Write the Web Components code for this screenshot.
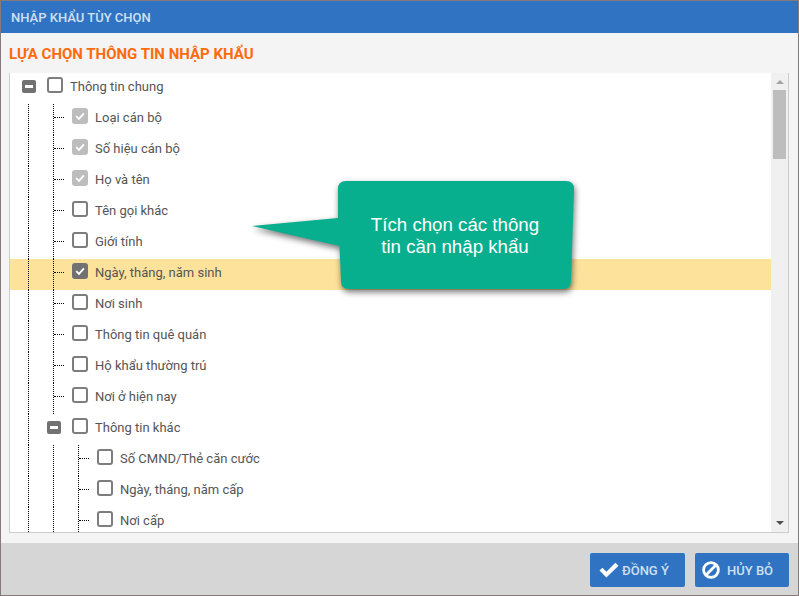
<!DOCTYPE html>
<html lang="vi">
<head>
<meta charset="utf-8">
<title>Nhập khẩu tùy chọn</title>
<style>
html, body { margin: 0; height: 100%; overflow: hidden; }
body { font-family: Roboto, "Liberation Sans", sans-serif; }
</style>
</head>
<body>
<import-dialog>
  <span slot="title">NHẬP KHẨU TÙY CHỌN</span>
  <span slot="heading">LỰA CHỌN THÔNG TIN NHẬP KHẨU</span>
  <option-tree slot="body"></option-tree>
  <dialog-button slot="actions" icon="check">ĐỒNG Ý</dialog-button>
  <dialog-button slot="actions" icon="ban">HỦY BỎ</dialog-button>
  <note-callout slot="overlay">Tích chọn các thông<br>tin cần nhập khẩu</note-callout>
</import-dialog>

<script>
class ImportDialog extends HTMLElement {
    connectedCallback() {
        this.attachShadow({ mode: 'open' });
        this.shadowRoot.innerHTML = `
            <style>
                :host {
                    display: flex;
                    flex-direction: column;
                    position: relative;
                    box-sizing: border-box;
                    width: 799px;
                    height: 596px;
                    border: 1px solid #86797a;
                    background: #f4f4f4;
                }
                header {
                    flex: none;
                    height: 32px;
                    padding-left: 10px;
                    display: flex;
                    align-items: center;
                    background: #3073c2;
                    color: #cfe0f3;
                    font-size: 13px;
                    font-weight: 500;
                }
                .content {
                    flex: 1;
                    min-height: 0;
                    display: flex;
                    flex-direction: column;
                    padding: 0 9px 10px 8px;
                }
                h2 {
                    flex: none;
                    margin: 0;
                    height: 40px;
                    padding-top: 2px;
                    box-sizing: border-box;
                    display: flex;
                    align-items: center;
                    color: #ff6a0c;
                    font-size: 15px;
                    font-weight: 700;
                }
                footer {
                    flex: none;
                    height: 52px;
                    box-sizing: border-box;
                    padding: 10px 9px 0 0;
                    display: flex;
                    justify-content: flex-end;
                    gap: 10px;
                    background: #d6d6d6;
                }
            </style>
            <header><slot name="title"></slot></header>
            <div class="content">
                <h2><slot name="heading"></slot></h2>
                <slot name="body"></slot>
            </div>
            <footer><slot name="actions"></slot></footer>
            <slot name="overlay"></slot>
        `;
    }
}

const TREE_ROWS = [
    { label: 'Thông tin chung', level: 0, group: true },
    { label: 'Loại cán bộ', level: 1, state: 'locked' },
    { label: 'Số hiệu cán bộ', level: 1, state: 'locked' },
    { label: 'Họ và tên', level: 1, state: 'locked' },
    { label: 'Tên gọi khác', level: 1 },
    { label: 'Giới tính', level: 1 },
    { label: 'Ngày, tháng, năm sinh', level: 1, state: 'checked', active: true },
    { label: 'Nơi sinh', level: 1 },
    { label: 'Thông tin quê quán', level: 1 },
    { label: 'Hộ khẩu thường trú', level: 1 },
    { label: 'Nơi ở hiện nay', level: 1 },
    { label: 'Thông tin khác', level: 1, group: true },
    { label: 'Số CMND/Thẻ căn cước', level: 2 },
    { label: 'Ngày, tháng, năm cấp', level: 2 },
    { label: 'Nơi cấp', level: 2 }
];

class OptionTree extends HTMLElement {
    connectedCallback() {
        this.attachShadow({ mode: 'open' });
        this.shadowRoot.innerHTML = `
            <style>
                :host {
                    display: flex;
                    flex: 1;
                    min-height: 0;
                    box-sizing: border-box;
                    background: #fff;
                    border-left: 1px solid #ccc;
                    border-right: 1px solid #ccc;
                    border-bottom: 1px solid #ccc;
                }
                .rows { flex: 1; min-width: 0; overflow: hidden; }
                .bar {
                    flex: none;
                    width: 17px;
                    position: relative;
                    background: #f0f0f0;
                }
                .thumb {
                    position: absolute;
                    left: 2px;
                    top: 17px;
                    width: 13px;
                    height: 69px;
                    background: #bdbdbd;
                }
                .arrow {
                    position: absolute;
                    left: 5px;
                    width: 0;
                    height: 0;
                    border-left: 4px solid transparent;
                    border-right: 4px solid transparent;
                }
                .up { top: 7px; border-bottom: 4px solid #a3a3a3; }
                .down { bottom: 7px; border-top: 4px solid #505050; }
            </style>
            <div class="rows"></div>
            <div class="bar">
                <div class="arrow up"></div>
                <div class="thumb"></div>
                <div class="arrow down"></div>
            </div>
        `;
        const rows = this.shadowRoot.querySelector('.rows');
        TREE_ROWS.forEach(r => {
            const row = document.createElement('tree-row');
            row.setAttribute('level', r.level);
            if (r.group) row.setAttribute('group', '');
            if (r.state) row.setAttribute('state', r.state);
            if (r.active) row.setAttribute('active', '');
            row.textContent = r.label;
            rows.appendChild(row);
        });
    }
}

class TreeRow extends HTMLElement {
    connectedCallback() {
        this.attachShadow({ mode: 'open' });
        const level = Number(this.getAttribute('level'));
        const group = this.hasAttribute('group');
        const state = this.getAttribute('state') || 'empty';

        // guide columns, the last one of a leaf row carries the branch
        const guides = group ? level : level + 1;
        let cols = '';
        for (let i = 0; i < guides; i++) {
            const branch = !group && i === guides - 1;
            cols += `<span class="guide${branch ? ' branch' : ''}"></span>`;
        }
        const toggle = group ? '<span class="toggle"></span>' : '';
        const tick = state === 'empty' ? '' :
            '<svg viewBox="0 0 16 16" width="16" height="16"><path d="M4.2 8.2 7 10.9 11.9 5.3" fill="none" stroke="#fff" stroke-width="1.8"/></svg>';

        this.shadowRoot.innerHTML = `
            <style>
                :host {
                    display: flex;
                    align-items: flex-start;
                    height: 31px;
                    padding-left: 18px;
                    color: #555;
                    font-size: 13px;
                    line-height: 16px;
                }
                :host([active]) { background: #fde29b; }
                :host([group][level="0"]) { padding-left: 12px; }
                .guide {
                    flex: none;
                    width: 25px;
                    height: 31px;
                    box-sizing: border-box;
                    border-left: 1px dotted #000;
                    position: relative;
                }
                .branch { width: 19px; }
                .branch::after {
                    content: '';
                    position: absolute;
                    left: 0;
                    top: 13px;
                    width: 10px;
                    border-top: 1px dotted #000;
                }
                .toggle {
                    flex: none;
                    width: 14px;
                    height: 13px;
                    margin: 7px 11px 0 0;
                    border-radius: 2px;
                    background: #717171;
                    position: relative;
                }
                :host([group][level="1"]) .toggle { margin-left: -6px; }
                .toggle::after {
                    content: '';
                    position: absolute;
                    left: 3px;
                    right: 3px;
                    top: 5px;
                    height: 3px;
                    background: #fff;
                }
                .check {
                    flex: none;
                    width: 16px;
                    height: 16px;
                    margin-top: 4px;
                    box-sizing: border-box;
                    border: 2px solid #7d7d7d;
                    border-radius: 3px;
                    background: #fff;
                    position: relative;
                }
                .check svg { position: absolute; left: -2px; top: -2px; }
                .check.locked { background: #bdbdbd; border-color: #bdbdbd; }
                .check.checked { background: #717171; border-color: #717171; }
                .label { margin-left: 7px; margin-top: 6px; white-space: nowrap; }
            </style>
            ${cols}${toggle}
            <span class="check ${state}">${tick}</span>
            <span class="label"><slot></slot></span>
        `;
    }
}

class DialogButton extends HTMLElement {
    connectedCallback() {
        this.attachShadow({ mode: 'open' });
        const icons = {
            check: '<svg width="20" height="16" viewBox="0 0 20 16"><path d="M0.500 8.600 3.400 5.700 7.400 9.700 16.400 0.700 19.500 3.700 7.400 15.600Z" fill="#fff"/></svg>',
            ban: '<svg width="18" height="18" viewBox="0 0 18 18"><circle cx="9" cy="9" r="7.400" fill="none" stroke="#fff" stroke-width="2.800"/><path d="M3.800 14.200 14.200 3.800" stroke="#fff" stroke-width="2.800"/></svg>'
        };
        const kind = this.getAttribute('icon');
        this.shadowRoot.innerHTML = `
            <style>
                :host {
                    display: flex;
                    align-items: center;
                    box-sizing: border-box;
                    height: 34px;
                    border-radius: 2px;
                    background: #3073c2;
                    color: #cfe0f3;
                    font-size: 13px;
                    font-weight: 500;
                }
                :host([icon="check"]) { width: 95px; padding-left: 9px; gap: 3px; }
                :host([icon="ban"]) { width: 94px; padding-left: 7px; gap: 7px; }
                svg { flex: none; }
            </style>
            ${icons[kind]}<span><slot></slot></span>
        `;
    }
}

class NoteCallout extends HTMLElement {
    connectedCallback() {
        this.attachShadow({ mode: 'open' });
        this.shadowRoot.innerHTML = `
            <style>
                :host {
                    display: block;
                    position: absolute;
                    left: 250px;
                    top: 179px;
                    width: 324px;
                    height: 112px;
                }
                svg {
                    position: absolute;
                    left: 0;
                    top: 0;
                    overflow: visible;
                    filter: drop-shadow(1px 3px 3px rgba(0, 0, 0, 0.55));
                }
                .text {
                    position: absolute;
                    left: 86px;
                    top: 34px;
                    width: 236px;
                    text-align: center;
                    color: #fff;
                    font-family: "Liberation Sans", Arial, sans-serif;
                    font-size: 18.700px;
                    line-height: 22px;
                }
            </style>
            <svg width="324" height="112" viewBox="0 0 324 112">
                <path fill="#08af8f" d="M87 9Q87 1 95 1H315Q323 1 323 9L320 101Q320 109 312 109H98Q90 109 90 101L88.500 66 1 46 87 38Z"/>
            </svg>
            <div class="text"><slot></slot></div>
        `;
    }
}

customElements.define('import-dialog', ImportDialog);
customElements.define('option-tree', OptionTree);
customElements.define('tree-row', TreeRow);
customElements.define('dialog-button', DialogButton);
customElements.define('note-callout', NoteCallout);
</script>
</body>
</html>
